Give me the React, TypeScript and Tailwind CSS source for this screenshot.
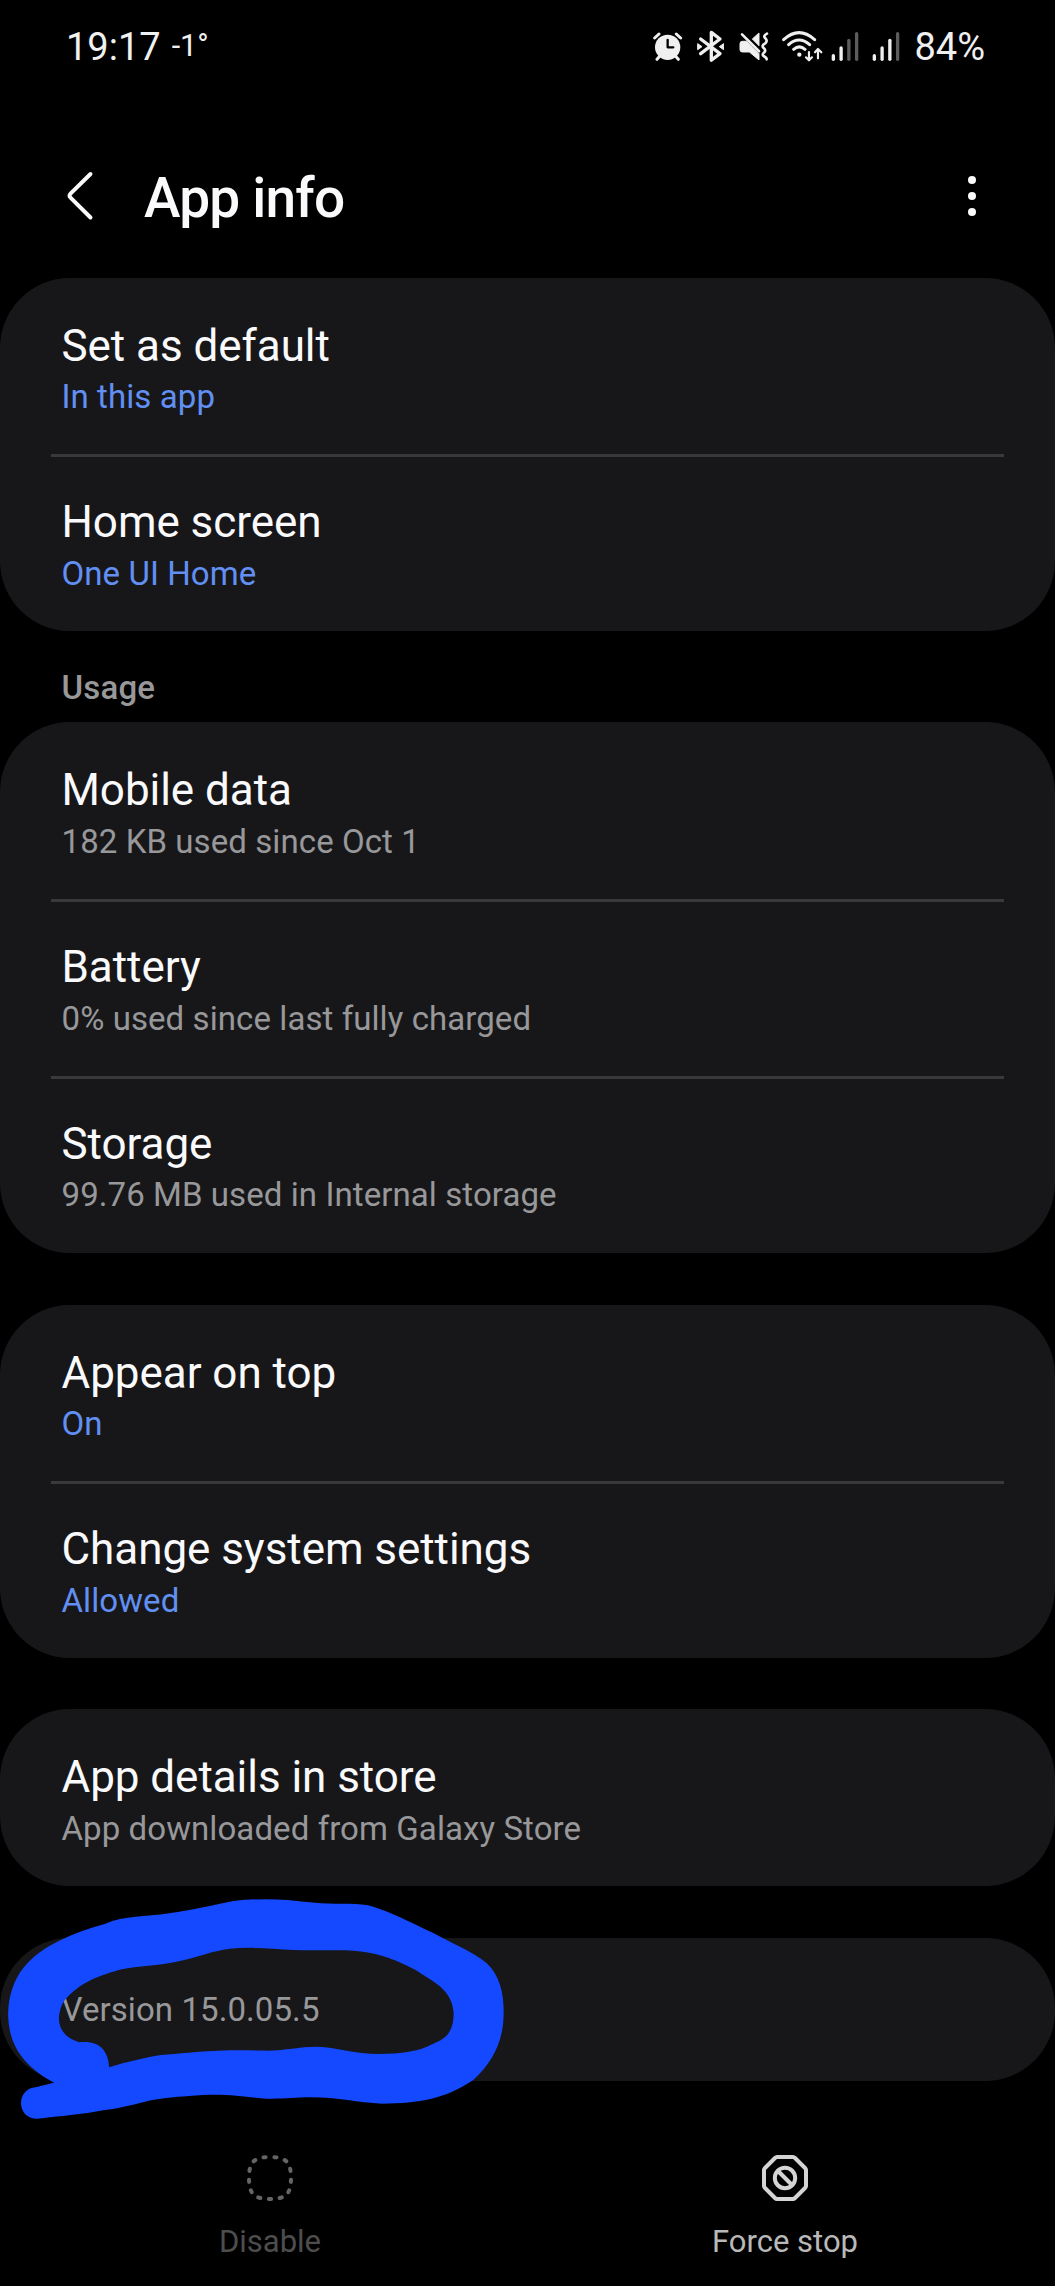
type RowData = {
  title: string;
  detail: string;
  highlighted?: boolean;
};

const launchRows: RowData[] = [
  { title: "Set as default", detail: "In this app", highlighted: true },
  { title: "Home screen", detail: "One UI Home", highlighted: true },
];

const usageRows: RowData[] = [
  { title: "Mobile data", detail: "182 KB used since Oct 1" },
  { title: "Battery", detail: "0% used since last fully charged" },
  { title: "Storage", detail: "99.76 MB used in Internal storage" },
];

const permissionRows: RowData[] = [
  { title: "Appear on top", detail: "On", highlighted: true },
  { title: "Change system settings", detail: "Allowed", highlighted: true },
];

const storeRows: RowData[] = [
  { title: "App details in store", detail: "App downloaded from Galaxy Store" },
];

function AlarmIcon() {
  return (
    <svg viewBox="36 45 88 100" className="h-[33.3px] w-[29.3px]" fill="none">
      <circle cx="80" cy="97" r="38" fill="#f0f0f0" />
      <path
        d="M41 69 54 57M119 69 106 57M48 133l8-9M112 133l-8-9"
        stroke="#f0f0f0"
        strokeWidth="9"
        strokeLinecap="round"
      />
      <path d="M80 75v22h17" stroke="#000" strokeWidth="7" strokeLinecap="round" strokeLinejoin="round" />
    </svg>
  );
}

function BluetoothIcon() {
  return (
    <svg viewBox="168 45 82 100" className="ml-[14.7px] h-[33.3px] w-[27.3px]" fill="none">
      <path
        d="M179 72 237 116 211 136V52L237 72 179 116"
        stroke="#f0f0f0"
        strokeWidth="10"
        strokeLinecap="round"
        strokeLinejoin="round"
      />
      <path d="M170 86v18l13-9ZM248 86v18l-13-9Z" fill="#f0f0f0" stroke="#f0f0f0" strokeWidth="3" strokeLinejoin="round" />
    </svg>
  );
}

function MuteVibrateIcon() {
  return (
    <svg viewBox="294 45 90 100" className="ml-[14.7px] h-[33.3px] w-[30px]" fill="none">
      <path
        d="M304 79h13l37 37v19l-29-24h-21q-7 0-7-7V86q0-7 7-7ZM334 72l20-18v38Z"
        fill="#f0f0f0"
        stroke="#f0f0f0"
        strokeWidth="3"
        strokeLinejoin="round"
      />
      <path d="M303 58 354 109" stroke="#f0f0f0" strokeWidth="8" strokeLinecap="round" />
      <path
        d="M378 56q-13 7-5 14t0 15q-13 7-5 14t2 13q-9 8-1 12t8 9"
        stroke="#f0f0f0"
        strokeWidth="8"
        strokeLinecap="round"
      />
    </svg>
  );
}

function WifiIcon() {
  return (
    <svg viewBox="422 45 124 100" className="ml-[12.7px] h-[33.3px] w-[41.3px]" fill="none">
      <g stroke="#f0f0f0" strokeWidth="9" strokeLinecap="round" strokeLinejoin="round">
        <path d="M427 74Q473 32 520 74M442 89Q473 61 505 89M457 103Q474 88 491 103" />
      </g>
      <circle cx="474" cy="119" r="6.5" fill="#f0f0f0" />
      <path
        d="M503 111v25M494 127l9 9 9-9M530 130v-27M521 112l9-10 10 10"
        stroke="#f0f0f0"
        strokeWidth="6.5"
        strokeLinecap="round"
        strokeLinejoin="round"
      />
    </svg>
  );
}

function SignalIcon({ bars, className }: { bars: number; className: string }) {
  const tops = [122, 99, 76, 56];

  return (
    <svg viewBox="570 45 84 100" className={`h-[33.3px] w-7 ${className}`} fill="none">
      {tops.map((top, index) => (
        <path
          key={top}
          d={`M${577 + index * 23.3} ${top}V133`}
          stroke={index < bars ? "#f0f0f0" : "#5c5c5c"}
          strokeWidth="10"
          strokeLinecap="round"
        />
      ))}
    </svg>
  );
}

function StatusBar() {
  return (
    <div className="flex h-[94px] items-start pl-[66px] text-[#f0f0f0]">
      <p className="mt-[23.5px] text-[38px] leading-[46px]">19:17</p>
      <p className="mt-[26.5px] ml-[11px] text-[30.5px] leading-[38px]">-1°</p>
      <div className="mt-[30px] ml-auto flex">
        <AlarmIcon />
        <BluetoothIcon />
        <MuteVibrateIcon />
        <WifiIcon />
        <SignalIcon bars={2} className="ml-2" />
        <SignalIcon bars={3} className="ml-[13.3px]" />
      </div>
      <p className="mt-[23.5px] mr-[70px] ml-[14px] text-[38px] leading-[46px]">84%</p>
    </div>
  );
}

function TitleBar() {
  return (
    <header className="flex h-[183.5px] items-start pl-[66px]">
      <svg viewBox="0 0 28 50" className="mt-[77px] h-[50px] w-7" fill="none">
        <path
          d="M24.5 3 4.5 22.7q-2 2 0 4L24.5 46.5"
          stroke="#fafafa"
          strokeWidth="4"
          strokeLinecap="round"
          strokeLinejoin="round"
        />
      </svg>
      <h1 className="mt-[72px] ml-[50px] text-[55px] leading-[64px] font-medium tracking-[-0.8px] text-[#fafafc]">
        App info
      </h1>
      <button type="button" className="mt-[82px] mr-[79.5px] ml-auto grid gap-2">
        <span className="size-2 rounded-full bg-[#fafafa]" />
        <span className="size-2 rounded-full bg-[#fafafa]" />
        <span className="size-2 rounded-full bg-[#fafafa]" />
      </button>
    </header>
  );
}

function SettingRow({ row, divided }: { row: RowData; divided: boolean }) {
  return (
    <div className="flex h-[176.7px] flex-col">
      <div className="flex-1 px-[61.5px] pt-[42px]">
        <p className="text-[44px] leading-[52px] tracking-[-0.05px] text-[#fafafc]">{row.title}</p>
        <p
          className={`mt-[5.5px] text-[33px] leading-10 tracking-[0.08px] ${
            row.highlighted ? "text-[#628ff2]" : "text-[#98989a]"
          }`}
        >
          {row.detail}
        </p>
      </div>
      {divided ? <div className="mx-[51px] h-[3px] translate-y-[3px] bg-[#39393b]" /> : null}
    </div>
  );
}

function SettingCard({ rows }: { rows: RowData[] }) {
  return (
    <section className="rounded-[70px] bg-[#17171a]">
      {rows.map((row, index) => (
        <SettingRow key={row.title} row={row} divided={index < rows.length - 1} />
      ))}
    </section>
  );
}

// Hand-drawn ring over the version card
function MarkerRing() {
  return (
    <svg
      viewBox="0 0 1568 780"
      preserveAspectRatio="none"
      className="pointer-events-none absolute -top-[57.5px] left-0 h-[260px] w-[530px]"
    >
      <path
        fill="#1549ff"
        fillRule="evenodd"
        d="M160 608C75 562 24 500 24 400C28 290 85 225 180 180Q235 152 310 132C370 105 430 112 500 100C570 90 635 74 690 63Q770 54 850 60Q900 65 950 70C1010 73 1060 68 1105 80C1160 98 1210 124 1280 158L1340 190Q1410 224 1440 250C1480 288 1491 345 1490 400C1490 480 1460 545 1400 600C1320 656 1240 670 1130 671C1060 668 1000 652 920 652C870 652 840 657 790 656C730 652 680 641 600 645C540 650 510 650 450 660C400 672 360 684 310 690C240 704 180 708 110 716C80 716 62 695 62 668C64 640 82 624 105 622ZM188 365C235 305 300 285 360 268C420 256 470 257 535 242C590 230 630 212 680 206C740 200 800 206 870 210C960 214 1030 204 1100 220C1160 234 1180 246 1230 270C1270 300 1340 325 1342 400C1342 450 1325 475 1280 492C1235 516 1190 521 1120 522C1050 521 1000 503 940 500C880 500 850 511 790 512C720 510 650 510 580 516C520 523 470 522 420 536Q370 546 323 562C320 508 290 480 235 487C200 476 175 455 174 415Q176 385 188 365Z"
      />
    </svg>
  );
}

function BottomBar() {
  return (
    <nav className="mt-[72.5px] grid grid-cols-2 px-[12.5px] text-[31px] leading-10">
      <button type="button" className="flex flex-col items-center text-[#4d4d4d]">
        <svg viewBox="0 0 48 48" className="size-12" fill="none">
          <path
            d="M24 3C40 3 45 8 45 24S40 45 24 45S3 40 3 24S8 3 24 3Z"
            pathLength="130"
            stroke="#656565"
            strokeWidth="4"
            strokeLinecap="round"
            strokeDasharray="2 8"
            strokeDashoffset="-4"
          />
        </svg>
        <span className="mt-5">Disable</span>
      </button>
      <button type="button" className="flex flex-col items-center text-[#b9b9b9]">
        <svg viewBox="0 0 48 48" className="size-12" fill="none" stroke="#d4d4d4" strokeWidth="4">
          <path
            d="M16 3H32Q33 3 34 4L44 14Q45 15 45 16V32Q45 33 44 34L34 44Q33 45 32 45H16Q15 45 14 44L4 34Q3 33 3 32V16Q3 15 4 14L14 4Q15 3 16 3Z"
          />
          <circle cx="24" cy="24" r="10.2" />
          <path d="M17 17 31 31" />
        </svg>
        <span className="mt-5">Force stop</span>
      </button>
    </nav>
  );
}

export default function App() {
  return (
    <div className="h-[2286px] w-[1055px] overflow-hidden bg-black font-['Roboto',sans-serif]">
      <StatusBar />
      <TitleBar />
      <main>
        <SettingCard rows={launchRows} />
        <h2 className="mt-[37px] mb-[14.6px] pl-[61.5px] text-[33px] leading-10 font-medium tracking-[0.2px] text-[#98989a]">
          Usage
        </h2>
        <SettingCard rows={usageRows} />
        <div className="mt-[52px] grid gap-[51.5px]">
          <SettingCard rows={permissionRows} />
          <SettingCard rows={storeRows} />
          <section className="relative h-[143.5px] rounded-[70px] bg-[#17171a] px-[61.5px] pt-[52px]">
            <p className="text-[33px] leading-10 tracking-[0.08px] text-[#98989a]">Version 15.0.05.5</p>
            <MarkerRing />
          </section>
        </div>
      </main>
      <BottomBar />
    </div>
  );
}
